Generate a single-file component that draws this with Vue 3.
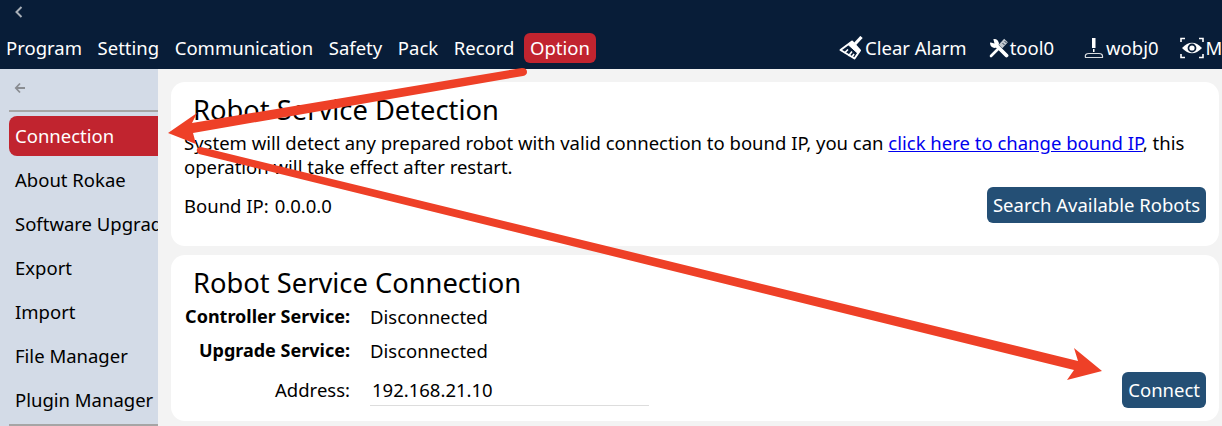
<script setup>
const tabs = ['Program', 'Setting', 'Communication', 'Safety', 'Pack', 'Record', 'Option']
const sideItems = ['Connection', 'About Rokae', 'Software Upgrade', 'Export', 'Import', 'File Manager', 'Plugin Manager']
</script>

<template>
  <div class="page">
    <header class="topbar">
      <div class="back-row">
        <svg class="chevron" width="10" height="14" viewBox="0 0 10 14"><path d="M7.5 2 L2.5 7 L7.5 12" fill="none" stroke="#a9b0b8" stroke-width="2" /></svg>
      </div>
      <div class="nav-row">
        <nav class="tabs">
          <span v-for="t in tabs" :key="t" class="tab" :class="{ active: t === 'Option' }">{{ t }}</span>
        </nav>
        <div class="tools">
          <span class="tool alarm">
            <svg width="24" height="24" viewBox="0 0 24 24" fill="none" stroke="#fff">
              <path d="M22.5 1 L16 8" stroke-width="3.2" />
              <path d="M1.5 14 L13 5.5 L21 14.5 L15.5 22.5 Z" stroke-width="2" stroke-linejoin="round" />
              <path d="M9 8.5 L13 5.5 L21 14.5 L19 17.5 Z" fill="#fff" stroke-width="1" />
              <path d="M5.5 17 L9 13.5 M9.5 20 L13 15.5 M13 21 L15 18" stroke-width="1.6" />
            </svg>
            <span>Clear Alarm</span>
          </span>
          <span class="tool tool0">
            <svg width="20" height="20" viewBox="0 0 20 20" fill="none">
              <circle cx="5.5" cy="5.5" r="4.4" fill="#fff" />
              <path d="M5.5 5.5 L17.5 17.5" stroke="#fff" stroke-width="3.8" stroke-linecap="round" />
              <path d="M5.5 5.5 L0 4 L0 0 L4 0 Z" fill="#081d38" />
              <path d="M10 10 L2 18" stroke="#fff" stroke-width="2.6" stroke-linecap="round" />
              <path d="M11.5 8.5 L17 2.5" stroke="#c3c9d0" stroke-width="5" />
              <path d="M13.5 5 L15.5 7 M15.5 3 L17.5 5" stroke="#081d38" stroke-width="0.8" />
            </svg>
            <span>tool0</span>
          </span>
          <span class="tool wobj">
            <svg width="20" height="20" viewBox="0 0 20 20" fill="none">
              <path d="M8 0 H11.5 V10 H8 Z M9 11 H10.5 V14 H9 Z" fill="#fff" />
              <path d="M1.5 19.5 Q0.5 15.5 5 15.5 H15 Q19 15.5 18.5 19.5 Z" stroke="#d7dbe0" stroke-width="1.2" />
            </svg>
            <span>wobj0</span>
          </span>
          <span class="tool eye">
            <svg width="24" height="22" viewBox="0 0 24 22" fill="none">
              <path d="M1 5 V1.5 H5 M19 1.5 H23 V5 M23 17 V20.5 H19 M5 20.5 H1 V17" stroke="#fff" stroke-width="1.6" />
              <path d="M2 11 Q12 0.5 22 11 Q12 21.5 2 11 Z" fill="#fff" />
              <circle cx="12" cy="11" r="4.4" fill="#081d38" />
              <circle cx="12" cy="11" r="2.6" fill="#fff" />
            </svg>
            <span>M</span>
          </span>
        </div>
      </div>
    </header>

    <div class="body">
      <aside class="sidebar">
        <div class="side-back">
          <svg width="12" height="12" viewBox="0 0 12 12" fill="none" stroke="#8a8d92" stroke-width="1.8"><path d="M6 1.5 L1.8 6 L6 10.5 M2 6 H11" /></svg>
        </div>
        <div class="side-rule"></div>
        <ul class="side-list">
          <li v-for="(s, i) in sideItems" :key="s" class="side-item" :class="{ active: i === 0 }">{{ s }}</li>
        </ul>
        <div class="side-rule"></div>
      </aside>

      <main class="content">
        <section class="card detect">
          <h2>Robot Service Detection</h2>
          <p>System will detect any prepared robot with valid connection to bound IP, you can <a href="#">click here to change bound IP</a>, this operation will take effect after restart.</p>
          <div class="bound">
            <span class="bound-text"><span>Bound IP:</span><span>0.0.0.0</span></span>
            <button class="btn">Search Available Robots</button>
          </div>
        </section>

        <section class="card connect">
          <h2>Robot Service Connection</h2>
          <div class="row status"><b>Controller Service:</b><span>Disconnected</span></div>
          <div class="row status"><b>Upgrade Service:</b><span>Disconnected</span></div>
          <div class="row address">
            <label>Address:</label>
            <span class="input">192.168.21.10</span>
            <button class="btn">Connect</button>
          </div>
        </section>
      </main>
    </div>

    <svg class="arrows" width="1222" height="426" viewBox="0 0 1222 426">
      <path d="M168 133 L197 113 L192 123 L522 68 Q527 68 527 72 Q527 75 523 76 L193 133 L196 144 Z" fill="#ee4027" />
      <path d="M201 147 L1078 361 L1074 348 L1102 371 L1067 380 L1074 370 L199 154 Q196 152 197 149 Q198 147 201 147 Z" fill="#ee4027" />
    </svg>
  </div>
</template>

<style scoped>
.page {
  position: relative;
  width: 1222px;
  height: 426px;
  overflow: hidden;
  background: #f3f3f3;
  color: #000;
  font-family: "Noto Sans", "Open Sans", sans-serif;
  font-size: 18.5px;
}
.topbar {
  height: 69px;
  background: #081d38;
  color: #fff;
  box-sizing: border-box;
}
.back-row {
  height: 33px;
  padding: 5px 0 0 14px;
  box-sizing: border-box;
}
.chevron {
  display: block;
}
.nav-row {
  display: flex;
  justify-content: space-between;
  height: 30px;
}
.tabs {
  display: flex;
  gap: 3.6px;
}
.tab {
  display: flex;
  align-items: center;
  padding: 0 6px 2px;
  border-radius: 6px;
}
.tab.active {
  background: #c1242f;
}
.tools {
  display: flex;
  align-items: center;
  width: 383px;
  overflow: hidden;
  flex: none;
}
.tool {
  display: flex;
  align-items: center;
  gap: 2px;
  flex: none;
}
.tool > span {
  padding-bottom: 2px;
}
.tool svg {
  display: block;
}
.tool0 {
  margin-left: 22px;
  gap: 1px;
}
.wobj {
  margin-left: 30px;
}
.eye {
  margin-left: 21px;
}
.body {
  display: flex;
  height: 357px;
}
.sidebar {
  width: 158px;
  flex: none;
  padding-left: 9px;
  box-sizing: border-box;
  background: #d3dbe7;
  overflow: hidden;
}
.side-back {
  height: 41px;
  padding: 13px 0 0 5px;
  box-sizing: border-box;
}
.side-back svg {
  display: block;
}
.side-rule {
  height: 2px;
  background: #a5a5a5;
}
.side-list {
  list-style: none;
  margin: 4px 0 0;
  padding: 0;
}
.side-item {
  height: 40px;
  line-height: 40px;
  margin-bottom: 4px;
  padding-left: 6px;
  white-space: nowrap;
  overflow: hidden;
}
.side-item.active {
  background: #c1242f;
  color: #fff;
  border-radius: 8px 0 0 8px;
}
.content {
  flex: 1;
  padding: 13px 3px 0 13px;
  display: flex;
  flex-direction: column;
  gap: 9px;
  min-width: 0;
}
.card {
  background: #fff;
  border-radius: 14px;
  box-sizing: border-box;
  padding: 0 13px;
}
.card h2 {
  margin: 0 0 0 9px;
  font-size: 27.3px;
  font-weight: 400;
  line-height: 36px;
}
.detect {
  height: 164px;
  padding-top: 10px;
}
.detect p {
  margin: 0;
  padding-top: 3px;
  line-height: 24px;
  width: 1010px;
}
.detect a {
  color: #0000ee;
}
.bound {
  display: flex;
  justify-content: space-between;
  align-items: center;
  margin-top: 8px;
}
.bound-text {
  display: flex;
  gap: 6px;
}
.btn {
  font: inherit;
  color: #fff;
  background: #244f75;
  border: 0;
  border-radius: 6px;
  height: 36px;
  padding: 0 6px 2px;
}
.connect {
  height: 166px;
  padding-top: 10px;
}
.connect h2 {
  margin-bottom: -1px;
}
.row {
  display: flex;
  align-items: center;
}
.row > b, .row > label {
  width: 166px;
  text-align: right;
  flex: none;
  font-weight: 700;
  font-size: 18px;
  white-space: nowrap;
  padding-bottom: 2px;
}
.row > label {
  font-weight: 400;
  font-size: 18.5px;
}
.status {
  height: 34px;
}
.status span {
  margin-left: 20px;
  padding-bottom: 2px;
}
.address {
  height: 36px;
  margin-top: 4px;
}
.input {
  width: 279px;
  margin-left: 20px;
  padding-left: 2px;
  height: 31px;
  line-height: 30px;
  box-sizing: border-box;
  border-bottom: 1px solid #ddd;
}
.address .btn {
  margin-left: auto;
}
.arrows {
  position: absolute;
  left: 0;
  top: 0;
  pointer-events: none;
}
</style>
